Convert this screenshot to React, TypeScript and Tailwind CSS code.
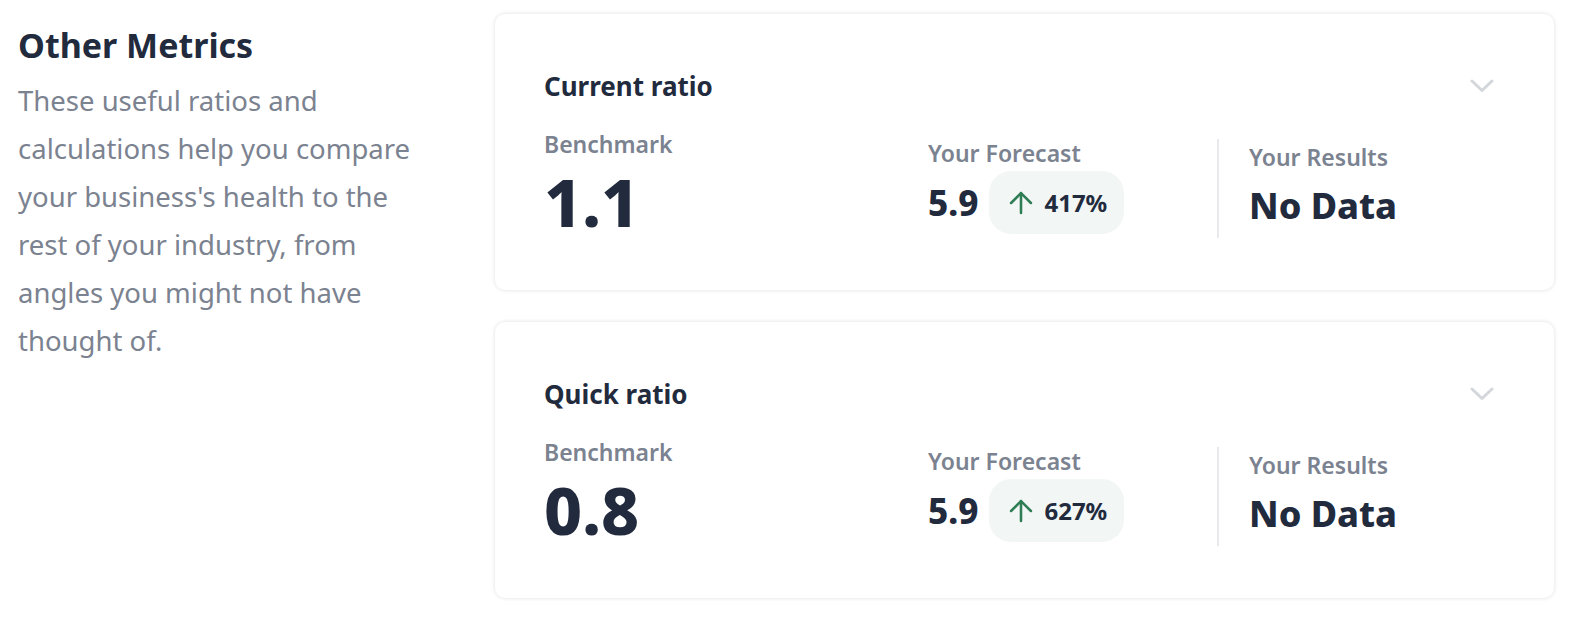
import { ArrowUp } from 'lucide-react';

interface Metric {
  title: string;
  benchmark: string;
  forecast: string;
  change: string;
}

const metrics: Metric[] = [
  { title: 'Current ratio', benchmark: '1.1', forecast: '5.9', change: '417%' },
  { title: 'Quick ratio', benchmark: '0.8', forecast: '5.9', change: '627%' },
];

function Chevron() {
  return (
    <svg width="24" height="14" viewBox="0 0 24 14" fill="none">
      <path d="M2 2 L12 11.5 L22 2" stroke="#d3d6da" strokeWidth="3" strokeLinecap="round" strokeLinejoin="round" />
    </svg>
  );
}

function MetricCard({ metric }: { metric: Metric }) {
  return (
    <div className="bg-white rounded-[10px] shadow-[0_0_4px_rgba(0,0,0,0.13)] h-[276px] pl-[49px] pr-[60px] pt-[56px]">
      <div className="flex items-center justify-between h-[32px]">
        <h3 className="text-[26px] font-bold text-[#222b3d] leading-[32px]">{metric.title}</h3>
        <Chevron />
      </div>
      <div className="flex items-start mt-[27px]">
        <div className="w-[384px]">
          <div className="text-[23px] font-semibold text-[#7b8290] leading-[30px]">Benchmark</div>
          <div className="text-[66px] font-extrabold text-[#222b3d] leading-[66px] mt-[9px]">{metric.benchmark}</div>
        </div>
        <div className="w-[289px] mt-[9px]">
          <div className="text-[23px] font-semibold text-[#7b8290] leading-[30px]">Your Forecast</div>
          <div className="flex items-center gap-[11px] mt-[3px]">
            <span className="text-[35px] font-extrabold text-[#222b3d] leading-none">{metric.forecast}</span>
            <span className="flex items-center gap-[6px] bg-[#f2f6f5] rounded-[22px] h-[63px] pl-[15px] pr-[17px] text-[24px] font-bold text-[#222b3d]">
              <ArrowUp className="w-[34px] h-[34px] text-[#2f7d55]" strokeWidth={1.8} />
              {metric.change}
            </span>
          </div>
        </div>
        <div className="border-l-2 border-[#e7e9ec] h-[99px] pl-[30px] mt-[10px]">
          <div className="text-[23px] font-semibold text-[#7b8290] leading-[30px] mt-[3px]">Your Results</div>
          <div className="text-[36px] font-extrabold text-[#222b3d] leading-[48px] mt-[10px]">No Data</div>
        </div>
      </div>
    </div>
  );
}

export default function App() {
  return (
    <div className="min-h-screen bg-white flex pl-[18px] pt-[14px]" style={{ fontFamily: '"Noto Sans", sans-serif' }}>
      <div className="w-[477px] shrink-0">
        <h2 className="text-[34px] font-bold text-[#222b3d] leading-[40px] mt-[11px]">Other Metrics</h2>
        <p className="w-[402px] text-[27.5px] text-[#7b8290] leading-[48px] mt-[12px]">
          These useful ratios and calculations help you compare your business's health to the rest of your industry, from angles you might not have thought of.
        </p>
      </div>
      <div className="w-[1059px] shrink-0 flex flex-col gap-[32px]">
        {metrics.map((m) => (
          <MetricCard key={m.title} metric={m} />
        ))}
      </div>
    </div>
  );
}
